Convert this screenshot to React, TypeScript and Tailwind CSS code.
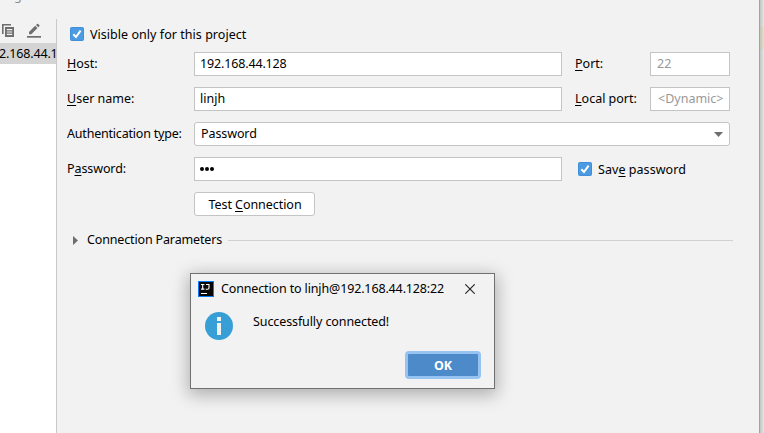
import type { ReactNode } from "react";

function Checkbox() {
  return (
    <svg className="h-[14px] w-[14px] shrink-0" viewBox="0 0 14 14">
      <rect x="0.5" y="0.5" width="13" height="13" rx="1" fill="#4b9ae2" stroke="#3f8fdb" />
      <path d="M3.3 7.2 6 10 10.6 3.6" fill="none" stroke="#fff" strokeWidth="2" />
    </svg>
  );
}

function Mn({ children }: { children: ReactNode }) {
  return <span className="underline decoration-1 underline-offset-[1.5px]">{children}</span>;
}

function Field({ className = "", children }: { className?: string; children: ReactNode }) {
  return (
    <div className={`flex h-6 items-center border border-[#c4c4c4] bg-white ${className}`}>{children}</div>
  );
}

function Sidebar() {
  return (
    <aside className="flex w-14 shrink-0 flex-col overflow-hidden bg-white">
      <div className="flex h-6 shrink-0 items-start bg-[#f2f2f2] pl-0.5 pt-1">
        <svg className="h-4 w-3" viewBox="0 0 12 16" fill="#6e6e6e">
          <path d="M0 1h9v1.6H1.6V11H0z" />
          <path fillRule="evenodd" d="M3 4h9v10H3zM4.8 6v1.2h5.4V6zm0 2.4v1.2h5.4V8.4zm0 2.4V12h5.4v-1.2z" />
        </svg>
        <svg className="ml-[13px] h-4 w-[14px]" viewBox="0 0 14 16" fill="#6e6e6e">
          <path d="M2 11.3V8.9L8.2 2.7l2.3 2.3-6.2 6.3zM9 1.9l1-1a.8.8 0 0 1 1.1 0l1.2 1.2a.8.8 0 0 1 0 1.1l-1 1z" />
          <path d="M0 13h14v1.7H0z" />
        </svg>
      </div>
      <div className="flex h-[21px] shrink-0 items-center whitespace-nowrap bg-[#d4d4d4]">
        <span className="-ml-px tracking-[-0.15px]">2.168.44.1</span>
      </div>
    </aside>
  );
}

function Dialog() {
  return (
    <div className="absolute left-[190px] top-[273px] flex h-[116px] w-[305px] flex-col border border-[#707070] bg-[#f2f2f2] shadow-[0_4px_16px_2px_rgba(0,0,0,0.28)]">
      <div className="flex h-[29px] items-center pl-[7px]">
        <svg className="h-4 w-4" viewBox="0 0 16 16">
          <rect width="16" height="16" fill="#087cfa" />
          <rect x="1" y="1" width="14" height="14" fill="#080808" />
          <path d="M3 3.5h3.4M4.7 3.5v4.6M3 8.1h3.4M8 3.5h3V7q0 1.2-1.2 1.2H7.7M3 12.5h6" fill="none" stroke="#fff" strokeWidth="1.1" />
        </svg>
        <span className="ml-[7px] w-[244px] whitespace-nowrap tracking-[-0.14px]">Connection to linjh@192.168.44.128:22</span>
        <svg className="h-[10px] w-[10px]" viewBox="0 0 10 10">
          <path d="M0.3 0.3 9.7 9.7M9.7 0.3 0.3 9.7" stroke="#222" strokeWidth="1.1" />
        </svg>
      </div>
      <div className="flex h-12 items-start pl-[14px] pt-[9px]">
        <svg className="h-7 w-7" viewBox="0 0 28 28">
          <circle cx="14" cy="14" r="14" fill="#389fd6" />
          <path d="M12 5h4v4h-4zM12 11h4v12h-4z" fill="#f2f2f2" />
        </svg>
        <span className="ml-5 leading-5 tracking-[-0.1px]">Successfully connected!</span>
      </div>
      <div className="flex justify-end pr-[13px]">
        <button className="flex h-7 w-[76px] items-center justify-center rounded-[4px] border-[3px] border-[#97c3f3] bg-[#4c8aca] pt-0.5 font-bold text-white">
          OK
        </button>
      </div>
    </div>
  );
}

export default function App() {
  return (
    <div className="relative flex h-[433px] w-[764px] overflow-hidden bg-[#f2f2f2] font-['Noto_Sans','Open_Sans',sans-serif] text-[12.5px] leading-6 text-black">
      <div className="flex w-[759px] shrink-0 flex-col">
        <header className="h-[19px] shrink-0 overflow-hidden pl-[14px]">
          <span className="block -translate-y-4 text-[#8c8c8c]">g</span>
        </header>
        <div className="flex flex-1">
          <Sidebar />
          <main className="flex-1 border-l border-[#c9c9c9] pl-[10px] pr-[26px]">
            <div className="flex h-[33px] items-start gap-[6px] pl-[3px] pt-[8px]">
              <Checkbox />
              <span className="leading-4 tracking-[0.04px]">Visible only for this project</span>
            </div>
            <div className="grid auto-rows-[24px] grid-cols-[127px_368px_88px_80px] gap-y-[11px] whitespace-nowrap">
              <label><Mn>H</Mn>ost:</label>
              <Field className="pl-[5px] tracking-[-0.15px]">192.168.44.128</Field>
              <label className="pl-[13px]"><Mn>P</Mn>ort:</label>
              <Field className="pl-[6px] text-[#999]">22</Field>

              <label><Mn>U</Mn>ser name:</label>
              <Field className="pl-[5px]">linjh</Field>
              <label className="pl-[13px]"><Mn>L</Mn>ocal port:</label>
              <Field className="pl-[7px] text-[#999]">&lt;Dynamic&gt;</Field>

              <label className="tracking-[-0.2px]">Authentication t<Mn>y</Mn>pe:</label>
              <Field className="col-span-3 justify-between rounded-[3px] pl-[6px] pr-[6px] tracking-[-0.1px]">
                Password
                <svg className="h-[5px] w-[9px]" viewBox="0 0 9 5"><path d="M0 0h9L4.5 5z" fill="#6e6e6e" /></svg>
              </Field>

              <label className="tracking-[-0.1px]">P<Mn>a</Mn>ssword:</label>
              <Field className="gap-[1.5px] pl-[5px]">
                <i className="h-[3.5px] w-[3.5px] rounded-full bg-black" />
                <i className="h-[3.5px] w-[3.5px] rounded-full bg-black" />
                <i className="h-[3.5px] w-[3.5px] rounded-full bg-black" />
              </Field>
              <div className="col-span-2 flex h-6 items-center gap-[6px] pl-4">
                <Checkbox />
                <span className="pt-0.5 tracking-[0.05px]">Sav<Mn>e</Mn> password</span>
              </div>

              <button className="col-start-2 flex h-6 w-[121px] items-center justify-center rounded-[3px] border border-[#c4c4c4] bg-white pl-px pt-0.5 tracking-[-0.05px]">
                <span>Test <Mn>C</Mn>onnection</span>
              </button>
            </div>
            <div className="mt-3 flex h-6 items-center pl-[6px]">
              <svg className="h-[9px] w-[5px]" viewBox="0 0 5 9"><path d="M0 0v9l5-4.5z" fill="#6e6e6e" /></svg>
              <span className="ml-[9px] w-[141px] whitespace-nowrap tracking-[-0.15px]">Connection Parameters</span>
              <div className="h-px flex-1 bg-[#d1d1d1]" />
            </div>
          </main>
        </div>
      </div>
      <div className="w-[5px] border-l border-[#a2a2a2] bg-linear-to-r from-[#c4c4c4] to-[#e6e6e6]">
        <div className="mt-[27px] h-[22px] bg-linear-to-r from-[#c6c4b2] to-[#e4e1cc]" />
      </div>
      <Dialog />
    </div>
  );
}
